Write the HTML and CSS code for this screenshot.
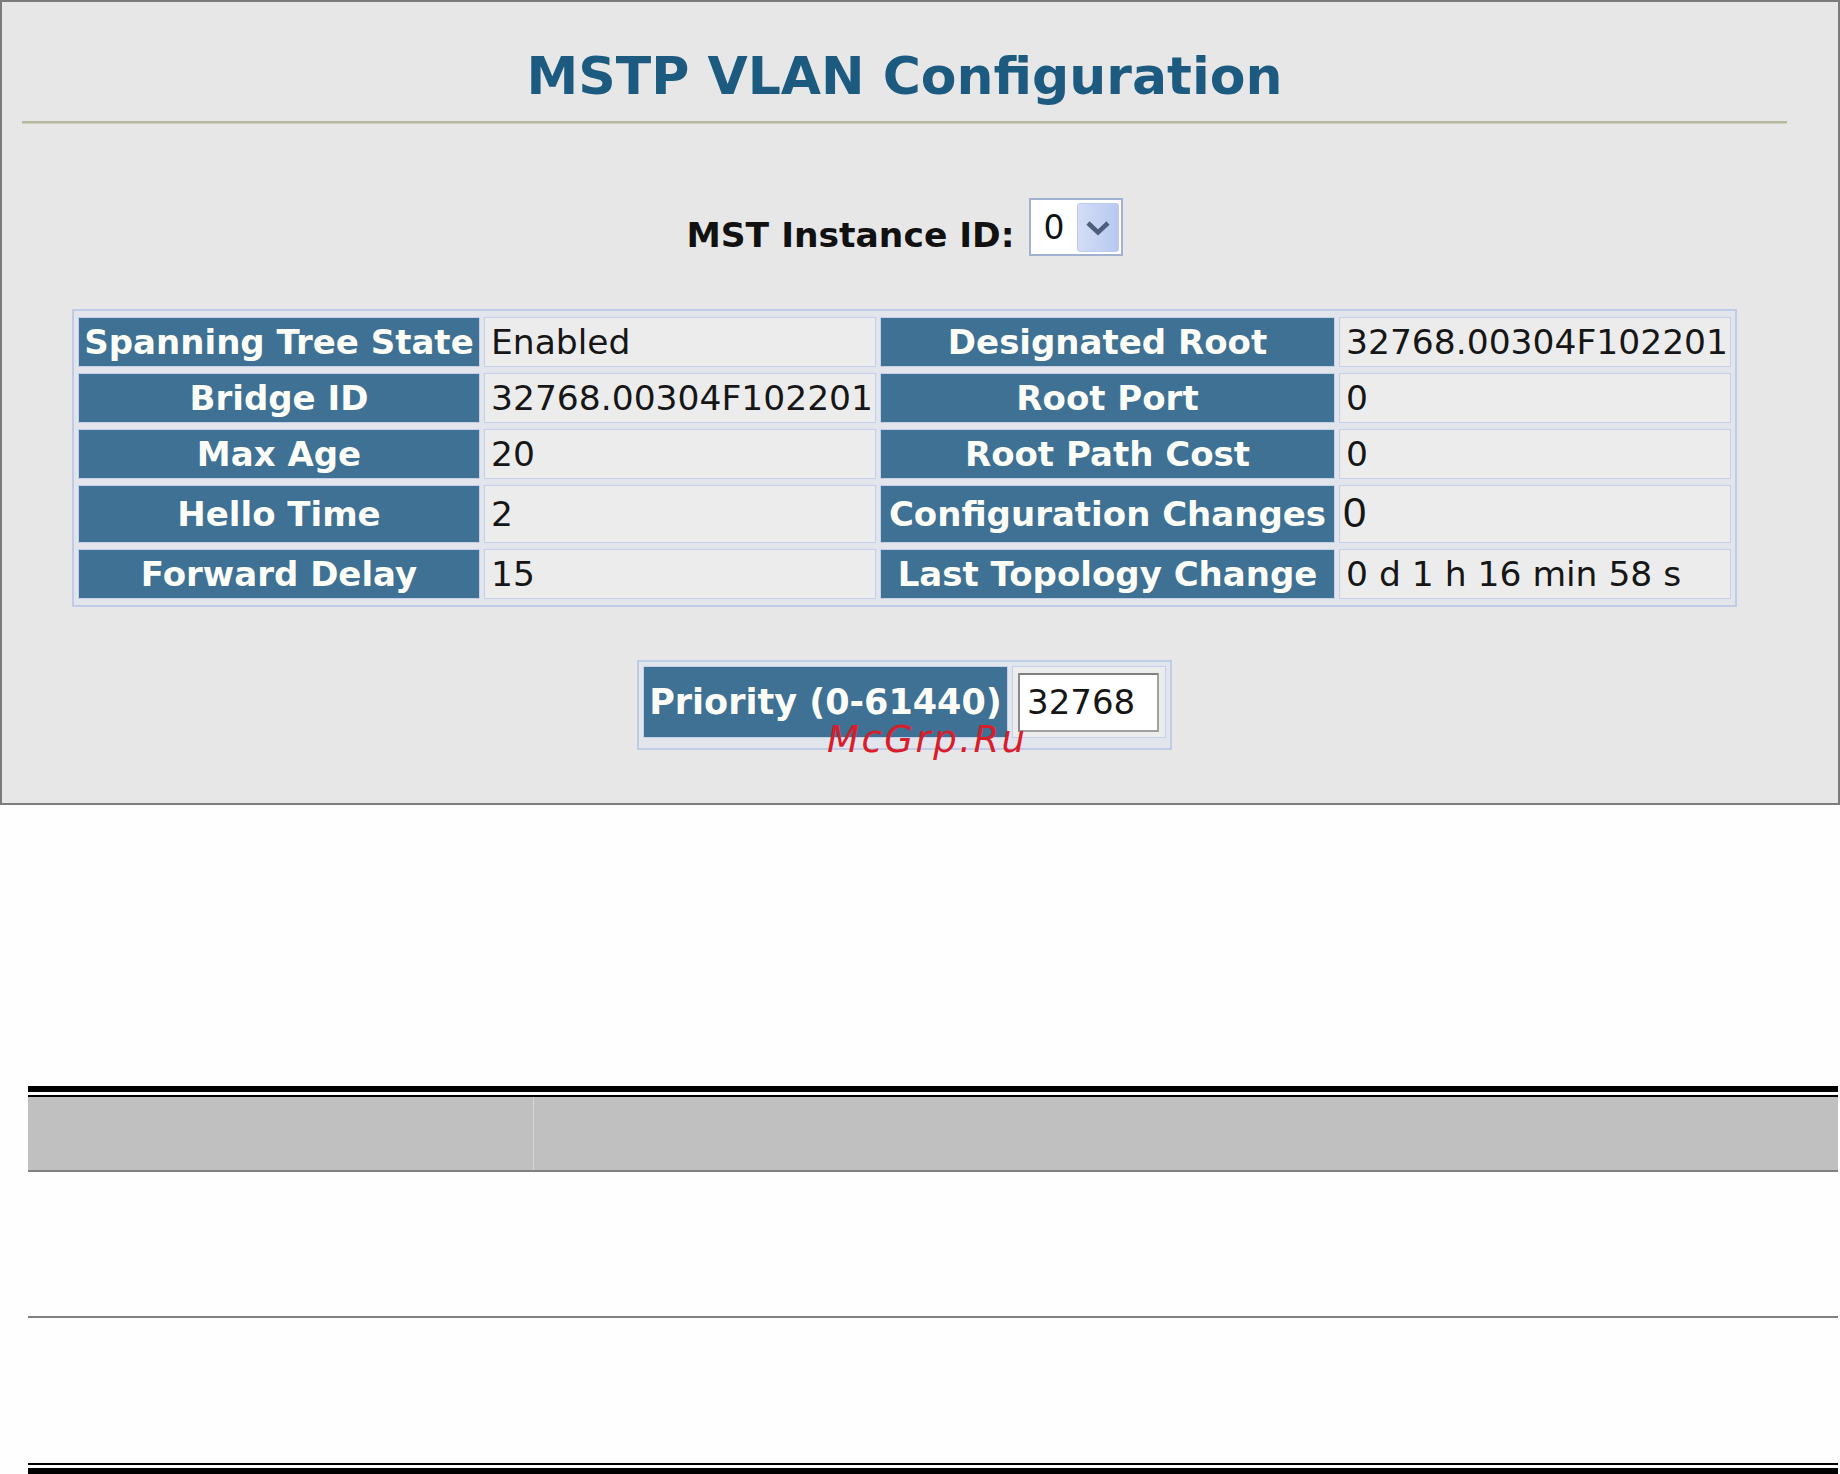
FILE: index.html
```html
<!DOCTYPE html>
<html lang="en">
<head>
<meta charset="UTF-8" />
<meta name="viewport" content="width=device-width, initial-scale=1" />
<title>MSTP VLAN Configuration</title>
<link rel="stylesheet" href="styles.css">
</head>
<body>
<div class="panel">
  <div class="content">
    <h1 class="title">MSTP VLAN Configuration</h1>
    <div class="rule"></div>

    <div class="instance">
      <span class="instance-label">MST Instance ID:</span>
      <div class="select">
        <span class="select-value">0</span>
        <span class="select-btn">
          <svg width="26" height="16" viewBox="0 0 26 16">
            <polyline points="3,3 13,12.5 23,3" fill="none" stroke="#4d5d7c" stroke-width="4.5" />
          </svg>
        </span>
      </div>
    </div>

    <table class="info">
      <colgroup>
        <col class="c-label1"><col class="c-value"><col class="c-label2"><col class="c-value">
      </colgroup>
      <tr>
        <th>Spanning Tree State</th><td>Enabled</td>
        <th>Designated Root</th><td>32768.00304F102201</td>
      </tr>
      <tr>
        <th>Bridge ID</th><td>32768.00304F102201</td>
        <th>Root Port</th><td>0</td>
      </tr>
      <tr>
        <th>Max Age</th><td>20</td>
        <th>Root Path Cost</th><td>0</td>
      </tr>
      <tr class="tall">
        <th>Hello Time</th><td>2</td>
        <th>Configuration Changes</th><td class="alt-digit">0</td>
      </tr>
      <tr>
        <th>Forward Delay</th><td>15</td>
        <th>Last Topology Change</th><td>0 d 1 h 16 min 58 s</td>
      </tr>
    </table>

    <table class="priority">
      <tr>
        <th>Priority (0-61440)</th>
        <td><input type="text" value="32768" readonly /></td>
      </tr>
    </table>
  </div>
  <div class="watermark">McGrp.Ru</div>
</div>

<div class="doc">
  <div class="line-thick"></div>
  <div class="line-thin"></div>
  <div class="params">
    <div class="params-head">
      <div class="col-name"></div>
      <div class="col-desc"></div>
    </div>
    <div class="params-row"></div>
    <div class="params-row last"></div>
  </div>
  <div class="line-thin bottom"></div>
  <div class="line-thick bottom"></div>
</div>
</body>
</html>
```

FILE: styles.css
```css
/* Pagina base */
body {
  margin: 0; background: #fefefe;
  font-family: "DejaVu Sans", Verdana, sans-serif;
  height: 1474px; overflow: hidden;
}

/* Panel gris con la configuracion */
.panel {
  position: relative;
  box-sizing: border-box;
  width: 1840px; height: 805px;
  border: 2px solid #7c7c7c;
  background: #e7e7e7;
}
.content {
  margin-left: 20px; width: 1765px;
}
.title {
  margin: 0; padding-top: 44px;
  font-size: 52px; line-height: 60px; font-weight: bold;
  color: #1d5a80; text-align: center;
}
.rule {
  margin-top: 15px;
  border-top: 2px solid #b8b8a0;
  border-bottom: 1px solid #d0d0be;
}

/* Selector de instancia */
.instance {
  display: flex; justify-content: center; align-items: center;
  gap: 14px; margin-top: 74px;
}
.instance-label {
  font-size: 34.5px; line-height: 40px; font-weight: bold;
  color: #111; padding-top: 15px;
}
.select {
  box-sizing: border-box;
  width: 94px; height: 58px;
  border: 2px solid #a1b1cf; background: #fff;
  display: flex; align-items: center; justify-content: space-between;
  padding: 3px 2px 2px 13px;
}
.select-value {
  font-size: 33px; line-height: 40px; color: #111;
}
.select-btn {
  box-sizing: border-box;
  width: 42px; height: 49px;
  display: flex; align-items: center; justify-content: center;
  background: linear-gradient(to right, #d3ddf6, #b8c8f1);
  border: 1px solid #bccaeb; border-radius: 3px;
}

/* Tabla de estado */
table.info {
  margin: 53px auto 0;
  table-layout: fixed;
  width: 1665px;
  border: 2px solid #c0cce6;
  border-spacing: 4px 6px;
  background: #e2e5ec;
}
col.c-label1 { width: 402px; }
col.c-label2 { width: 455px; }
col.c-value { width: 392px; }
table.info th, table.info td {
  border: 1px solid #c4cfe9;
  padding: 4px 6px;
  line-height: 40px;
  white-space: nowrap;
  overflow: hidden;
}
table.info th {
  background: #3e7194; color: #fdfdf8;
  font-size: 34px; font-weight: bold; text-align: center;
  padding: 4px 0;
}
table.info td {
  background: #ececec; color: #161616;
  font-size: 34.5px; text-align: left;
}
table.info tr.tall th, table.info tr.tall td {
  padding-top: 8px; padding-bottom: 8px;
}
table.info tr.tall td.alt-digit {
  font-family: "Liberation Sans", Arial, sans-serif;
  font-size: 42px; padding: 7px 0 9px 3px;
}

/* Prioridad */
table.priority {
  margin: 53px auto 0;
  border: 2px solid #c0cce6;
  border-spacing: 4px;
  padding-bottom: 6px;
  background: #e2e5ec;
}
table.priority th {
  width: 363px;
  border: 1px solid #c4cfe9;
  background: #3e7194; color: #fdfdf8;
  font-size: 35px; font-weight: bold; line-height: 40px;
  padding: 15px 0; white-space: nowrap;
}
table.priority td {
  width: 141px;
  border: 1px solid #c4cfe9;
  background: #ececec;
  padding: 0 6px 0 5px;
}
table.priority input {
  display: block; box-sizing: border-box;
  width: 141px; height: 59px;
  border: 2px solid #a0a0a0; border-top-color: #808080; border-left-color: #8a8a8a;
  background: #fff; color: #161616;
  font-family: "DejaVu Sans", Verdana, sans-serif; font-size: 34px;
  padding: 0 0 0 7px; margin: 0;
}

/* Marca de agua */
.watermark {
  position: absolute; left: 825px; top: 719px;
  font-family: "DejaVu Sans", sans-serif; font-style: italic;
  font-size: 37px; line-height: 37px; letter-spacing: 2.5px;
  color: #d81e2a;
}

/* Tabla del documento */
.doc {
  margin: 281px 0 0 28px; width: 1810px;
}
.line-thick { height: 6px; background: #000; }
.line-thin { height: 2px; background: #000; margin-top: 3px; }
.line-thin.bottom { margin-top: 0; }
.line-thick.bottom { margin-top: 3px; }
.params-head {
  display: grid; grid-template-columns: 506px 1fr;
  height: 73px; background: #c0c0c0;
  border-bottom: 2px solid #808080;
}
.params-head .col-name { border-right: 1px solid #d6d6d6; }
.params-row {
  height: 144px; border-bottom: 2px solid #808080;
}
.params-row.last { height: 145px; border-bottom: 0; }
```
